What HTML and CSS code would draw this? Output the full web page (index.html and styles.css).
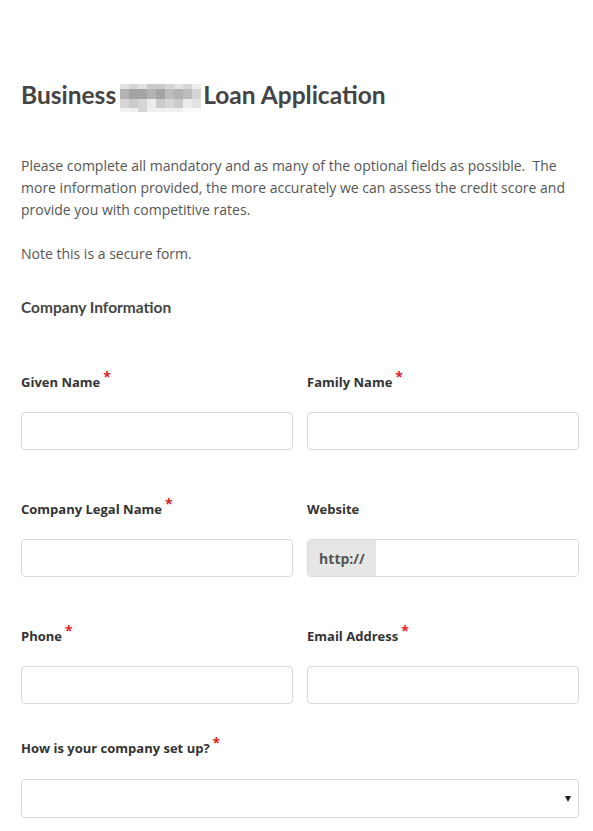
FILE: index.html
```html
<!DOCTYPE html>
<html lang="en">
<head>
    <meta charset="UTF-8">
    <meta name="viewport" content="width=device-width, initial-scale=1.0">
    <title>Business Loan Application</title>
    <link rel="stylesheet" href="styles.css">
</head>
<body>

    <div class="container">
        <h1>Business<span class="blur"><i class="c1"></i><i class="c2"></i><i class="c1"></i><i class="c3"></i><i class="c3"></i><i class="c2"></i><i class="c1"></i><i class="c2"></i><i class="c4"></i><i class="d2"></i><i class="d1"></i><i class="d1"></i><i class="d2"></i><i class="d1"></i><i class="d3"></i><i class="d2"></i><i class="d3"></i><i class="d4"></i><i class="c2"></i><i class="c3"></i><i class="c2"></i><i class="c4"></i><i class="c3"></i><i class="c2"></i><i class="c3"></i><i class="c4"></i><i class="c1"></i><i class="c4"></i><i class="c4"></i><i class="c3"></i><i class="c4"></i><i class="c4"></i><i class="c4"></i><i class="c4"></i><i class="c5"></i><i class="c5"></i></span>Loan Application</h1>

        <p class="intro">Please complete all mandatory and as many of the optional fields as possible.&nbsp; The more information provided, the more accurately we can assess the credit score and provide you with competitive rates.</p>

        <p class="note">Note this is a secure form.</p>

        <h3>Company Information</h3>

        <form class="form-grid">
            <div class="field">
                <label for="given">Given Name<span class="req">*</span></label>
                <input type="text" id="given">
            </div>
            <div class="field">
                <label for="family">Family Name<span class="req">*</span></label>
                <input type="text" id="family">
            </div>

            <div class="field">
                <label for="legal">Company Legal Name<span class="req">*</span></label>
                <input type="text" id="legal">
            </div>
            <div class="field">
                <label for="website">Website</label>
                <div class="input-addon">
                    <span class="addon">http://</span>
                    <input type="text" id="website">
                </div>
            </div>

            <div class="field">
                <label for="phone">Phone<span class="req">*</span></label>
                <input type="text" id="phone">
            </div>
            <div class="field">
                <label for="email">Email Address<span class="req">*</span></label>
                <input type="text" id="email">
            </div>

            <div class="field full">
                <label for="setup">How is your company set up?<span class="req">*</span></label>
                <div class="select-wrap">
                    <select id="setup">
                        <option></option>
                    </select>
                </div>
            </div>
        </form>
    </div>

</body>
</html>
```

FILE: styles.css
```css
* {
    margin: 0;
    padding: 0;
    box-sizing: border-box;
}

body {
    background-color: white;
    font-family: "Open Sans", Arial, sans-serif;
    color: #555;
}

.container {
    padding: 78px 14px 0 21px;
}

h1 {
    font-family: Lato, Arial, sans-serif;
    font-weight: bold;
    font-size: 24.5px;
    line-height: 32px;
    color: #444;
    display: flex;
    align-items: center;
}

.blur {
    display: inline-grid;
    grid-template-columns: repeat(9, 9px);
    grid-template-rows: 5px 10px 9px 4px;
    margin: 6px 2px 0 4px;
}

.blur i:nth-child(n+28) {
    opacity: 0.8;
}

.c1 { background-color: #e2e2e2; }
.c2 { background-color: #d6d6d6; }
.c3 { background-color: #cbcbcb; }
.c4 { background-color: #ececec; }
.c5 { background-color: #f6f6f6; }
.d1 { background-color: #a4a4a4; }
.d2 { background-color: #b2b2b2; }
.d3 { background-color: #bcbcbc; }
.d4 { background-color: #d4d4d4; }

.intro,
.note {
    font-size: 14px;
    line-height: 22px;
}

.intro {
    margin-top: 43px;
}

.note {
    margin-top: 22px;
}

h3 {
    font-family: Lato, Arial, sans-serif;
    font-weight: bold;
    font-size: 15.5px;
    line-height: 20px;
    color: #444;
    margin-top: 32px;
}

.form-grid {
    display: grid;
    grid-template-columns: 1fr 1fr;
    column-gap: 14px;
    row-gap: 49px;
    margin-top: 55px;
    width: 558px;
}

.field label {
    display: block;
    font-size: 13px;
    line-height: 20px;
    font-weight: bold;
    color: #333;
    margin-bottom: 20px;
}

.req {
    color: #e02222;
    font-size: 14px;
    position: relative;
    top: -5px;
    margin-left: 3px;
}

.field input,
.field select {
    width: 100%;
    height: 38px;
    border: 1px solid #d9d9d9;
    border-radius: 4px;
    padding: 0 10px;
    font-family: "Open Sans", Arial, sans-serif;
    font-size: 14px;
    background-color: white;
}

.input-addon {
    display: flex;
    height: 38px;
    border: 1px solid #d9d9d9;
    border-radius: 4px;
    overflow: hidden;
}

.addon {
    width: 68px;
    background-color: #e6e6e6;
    color: #555;
    font-size: 14px;
    font-weight: bold;
    display: flex;
    align-items: center;
    justify-content: center;
}

.input-addon input {
    border: none;
    border-radius: 0;
    height: 36px;
    flex: 1;
}

.full {
    grid-column: 1 / 3;
    margin-top: -15px;
}

.full label {
    margin-bottom: 21px;
}

.select-wrap {
    position: relative;
}

.field select {
    height: 39px;
    appearance: none;
    -webkit-appearance: none;
}

.select-wrap::after {
    content: "";
    position: absolute;
    right: 8px;
    top: 17px;
    border-left: 3px solid transparent;
    border-right: 3px solid transparent;
    border-top: 6px solid #222;
}
```
